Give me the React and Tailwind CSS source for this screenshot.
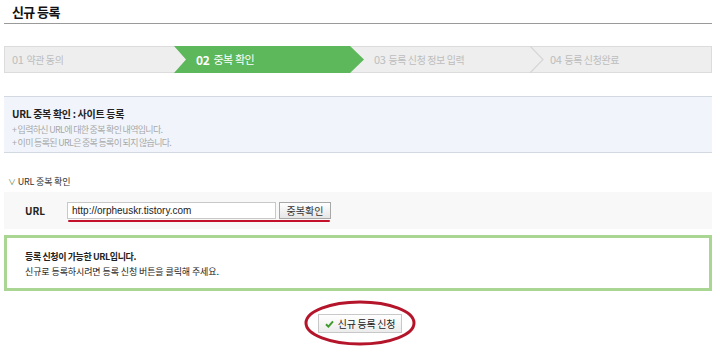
import React from 'react';

const KR = "font-['Noto_Sans_CJK_KR','Noto_Sans',sans-serif]";

function Steps() {
  return (
    <div className="relative flex h-[27px] border border-[#dcdcdc] bg-[#eeeeee] text-[10px] tracking-[-0.4px]">
      <div className="flex w-[169px] items-center whitespace-nowrap pl-[7px] text-[#bdbdbd]">
        <span className="mr-[3px] text-[11px]">01</span>약관 동의
      </div>
      <div className="-my-px flex w-[190px] items-center whitespace-nowrap bg-[#5cb85a] pl-[22px] text-white [clip-path:polygon(0_0,176px_0,190px_50%,176px_100%,0_100%,12px_50%)]">
        <span className="mr-[4px] text-[12px] font-bold">02</span>
        <span className="text-[11px]">중복 확인</span>
      </div>
      <div className="flex w-[165px] items-center whitespace-nowrap pl-[10px] text-[#bdbdbd]">
        <span className="mr-[3px] text-[11px]">03</span>등록 신청 정보 입력
      </div>
      <svg width="16" height="27" viewBox="0 0 16 27" className="-my-px shrink-0">
        <polyline points="1,0 14,13.5 1,27" fill="none" stroke="#d6d6d6" strokeWidth="1.2" />
      </svg>
      <div className="flex items-center whitespace-nowrap pl-[5px] text-[#bdbdbd]">
        <span className="mr-[3px] text-[11px]">04</span>등록 신청완료
      </div>
    </div>
  );
}

export default function App() {
  return (
    <div className={`h-[362px] w-[720px] bg-white ${KR} text-[#333]`}>
      <div className="w-[712px] pl-[4px]">
        {/* Title */}
        <div className="flex h-[24px] items-center border-b border-[#9a9a9a] pl-[8px]">
          <h1 className="text-[13px] font-bold tracking-[-0.6px] text-[#111]">신규 등록</h1>
        </div>

        {/* Steps */}
        <div className="mt-[22px]">
          <Steps />
        </div>

        {/* Info */}
        <div className="mt-[23px] h-[57px] border-y border-[#d2d9e1] bg-[#f1f5fb] pl-[8px] pt-[10px]">
          <p className="text-[10px] font-bold leading-[13px] tracking-[-0.3px] text-[#222]">URL 중복 확인 : 사이트 등록</p>
          <p className="mt-[3px] text-[9px] leading-[13px] tracking-[-0.7px] text-[#a8a8a8]">+ 입력하신 URL에 대한 중복 확인 내역입니다.</p>
          <p className="text-[9px] leading-[13px] tracking-[-0.7px] text-[#a8a8a8]">+ 이미 등록된 URL은 중복 등록이 되지 않습니다.</p>
        </div>

        {/* URL check */}
        <div className="mt-[22px] flex items-center pl-[4px] text-[9px] leading-[14px] tracking-[-0.2px] text-[#333]">
          <span className="mr-[2px] text-[8px] text-[#6a8a5a]">∨</span>URL 중복 확인
        </div>
        <div className="mt-[3px] flex h-[37px] items-center bg-[#f8f8f8] pl-[21px]">
          <span className="w-[42px] text-[10px] font-bold text-[#222]">URL</span>
          <div className="relative flex items-center">
            <div className="flex h-[17px] w-[209px] items-center border border-[#c8c8c8] bg-white pl-[4px] font-['Liberation_Sans',sans-serif] text-[10px] text-[#222]">
              http://orpheuskr.tistory.com
            </div>
            <button className="ml-[3px] h-[17px] w-[52px] whitespace-nowrap border border-[#a8a8a8] bg-gradient-to-b from-white to-[#e6e6e6] text-[10px] leading-[15px] text-[#333]">
              중복확인
            </button>
            <div className="absolute left-[1px] top-[18px] h-[2px] w-[262px] rounded-full bg-[#c4102a]" />
          </div>
        </div>

        {/* Result */}
        <div className="mt-[6px] h-[56px] border-[3px] border-[#a9d793] bg-white pl-[18px] pt-[11px] text-[9px] leading-[15px] text-[#222]">
          <p className="font-bold tracking-[-0.4px]">등록 신청이 가능한 URL입니다.</p>
          <p className="tracking-[-0.1px]">신규로 등록하시려면 등록 신청 버튼을 클릭해 주세요.</p>
        </div>

        {/* Submit */}
        <div className="mt-[23px] flex justify-center pl-[4px]">
          <div className="relative">
            <button className="flex h-[19px] w-[84px] items-center justify-center gap-[4px] whitespace-nowrap border border-[#c8c8c8] bg-gradient-to-b from-white to-[#ececec] text-[10px] tracking-[-0.3px] text-[#222]">
              <svg width="9" height="8" viewBox="0 0 9 8">
                <path d="M1 4.2 L3.4 6.6 L8 1.4" fill="none" stroke="#3f9a2c" strokeWidth="2" />
              </svg>
              신규 등록 신청
            </button>
            <svg width="112" height="46" viewBox="0 0 112 46" className="pointer-events-none absolute left-[-14px] top-[-14px]">
              <ellipse cx="56" cy="23" rx="54" ry="21" fill="none" stroke="#b5152b" strokeWidth="3" />
            </svg>
          </div>
        </div>
      </div>
    </div>
  );
}
